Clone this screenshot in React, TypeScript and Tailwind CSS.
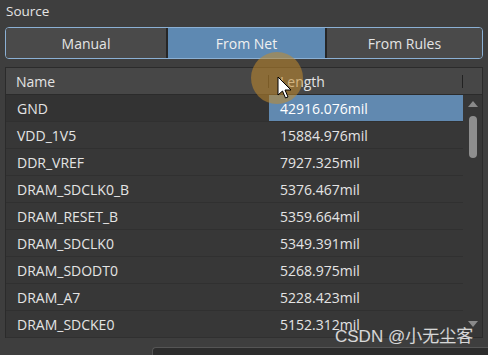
import React from "react";

const rows: [string, string][] = [
  ["GND", "42916.076mil"],
  ["VDD_1V5", "15884.976mil"],
  ["DDR_VREF", "7927.325mil"],
  ["DRAM_SDCLK0_B", "5376.467mil"],
  ["DRAM_RESET_B", "5359.664mil"],
  ["DRAM_SDCLK0", "5349.391mil"],
  ["DRAM_SDODT0", "5268.975mil"],
  ["DRAM_A7", "5228.423mil"],
  ["DRAM_SDCKE0", "5152.312mil"],
];

export default function App() {
  return (
    <div
      className="relative w-[488px] h-[355px] overflow-hidden bg-[#3e3e3e] text-[#e4e4e4]"
      style={{ fontFamily: '"Open Sans", "Noto Sans", sans-serif' }}
    >
      <div className="pl-[6px] pt-[1px] h-[24px] text-[13.5px] leading-[20px]">Source</div>
      <div className="mx-[5px] mt-[3px] h-[32px] flex rounded-[4px] border border-[#8bb0d4] overflow-hidden text-[14px]">
        <div className="w-[160px] flex items-center justify-center bg-[#4a4a4a]">Manual</div>
        <div className="w-[2px] bg-[#262626]" />
        <div className="w-[157px] flex items-center justify-center bg-[#5e89b2] text-[#f0f0f0]">From Net</div>
        <div className="w-[2px] bg-[#262626]" />
        <div className="flex-1 flex items-center justify-center bg-[#4a4a4a]">From Rules</div>
      </div>
      <div className="mx-[5px] mt-[8px] h-[271px] border border-[#2b2b2b] bg-[#373737] flex flex-col text-[14px]">
        <div className="h-[27px] flex items-center bg-[#474747] border-b border-[#2b2b2b] shrink-0">
          <div className="w-[262px] pl-[10px] relative h-full flex items-center">Name</div>
          <div className="w-[1px] h-[13px] bg-[#222]" />
          <div className="flex-1 pl-[11px]">Length</div>
          <div className="w-[1px] h-[13px] bg-[#222] mr-[19px]" />
        </div>
        <div className="flex flex-1 min-h-0">
          <div className="flex-1 flex flex-col">
            {rows.map(([n, v], i) => (
              <div key={n} className="h-[27px] flex border-b border-[#303030] shrink-0">
                <div className={`w-[263px] pl-[11px] flex items-center ${i === 0 ? "bg-[#333333]" : ""}`}>{n}</div>
                <div
                  className={`flex-1 pl-[11px] flex items-center ${i === 0 ? "bg-[#6189b0] text-white" : ""}`}
                >
                  {v}
                </div>
              </div>
            ))}
          </div>
          <div className="w-[19px] relative shrink-0">
            <svg className="absolute left-[5px] top-[6px]" width="10" height="6" viewBox="0 0 10 6">
              <path d="M0 6 L5 0 L10 6 Z" fill="#8a8a8a" />
            </svg>
            <div className="absolute left-[6px] top-[21px] w-[8px] h-[42px] rounded-full bg-[#8e8e8e]" />
            <svg className="absolute left-[5px] top-[226px]" width="10" height="6" viewBox="0 0 10 6">
              <path d="M0 0 L5 6 L10 0 Z" fill="#8a8a8a" />
            </svg>
          </div>
        </div>
      </div>
      <div className="ml-[152px] mt-[9px] h-[20px] rounded-tl-[4px] bg-[#2c2c2c] border-t border-l border-[#555]" />
      {/* cursor highlight */}
      <div className="absolute left-[251px] top-[52px] w-[52px] h-[52px] rounded-full bg-[#c38a2c] opacity-55" />
      <svg className="absolute left-[277px] top-[76px]" width="16" height="24" viewBox="0 0 16 24">
        <path d="M1 1 L1 19 L5.5 15 L8.5 22 L11 21 L8 14 L14 14 Z" fill="#fff" stroke="#000" strokeWidth="1" />
      </svg>
      <div
        className="absolute left-[335px] top-[326px] text-[17px] leading-[22px] text-white/80"
        style={{ fontFamily: '"Liberation Sans", "Noto Sans CJK SC", sans-serif' }}
      >
        CSDN @小无尘客
      </div>
    </div>
  );
}
